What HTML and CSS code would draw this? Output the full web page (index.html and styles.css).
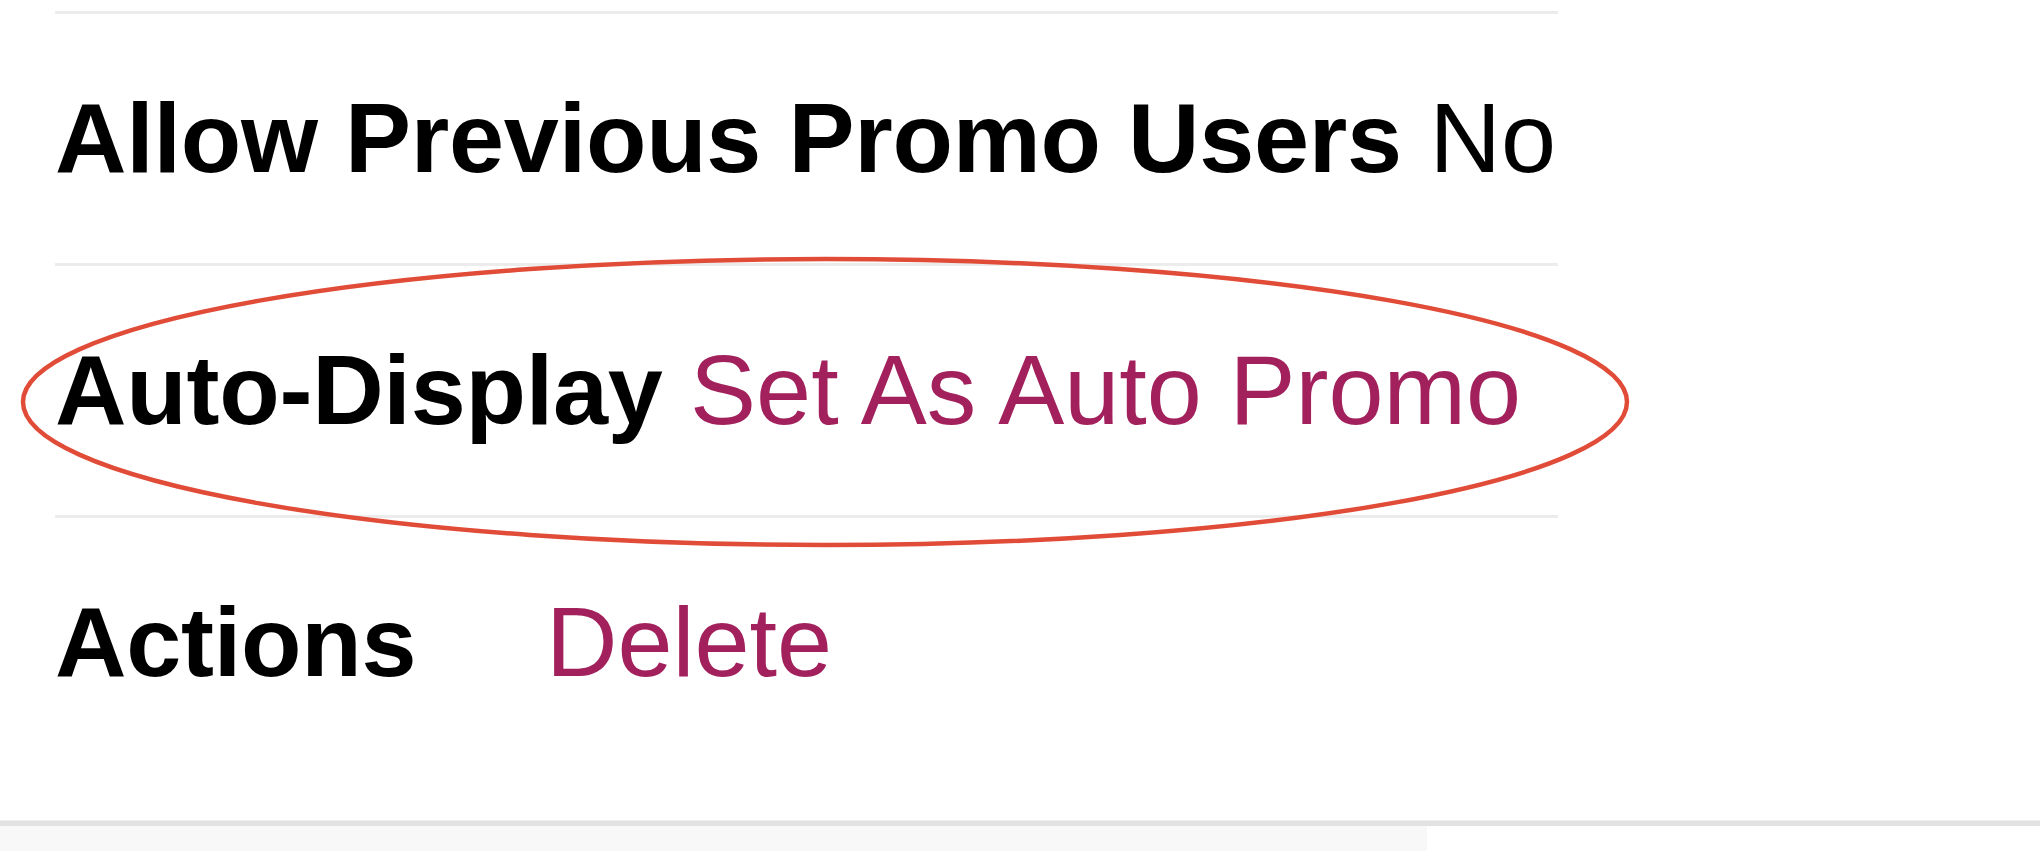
FILE: index.html
```html
<!DOCTYPE html>
<html lang="en">
<head>
<meta charset="utf-8">
<title>Promo details</title>
<link rel="stylesheet" href="styles.css">
</head>
<body>
<div class="page">
  <div class="details">
    <div class="row">
      <span class="label">Allow Previous Promo Users</span> <span class="value">No</span>
    </div>
    <div class="row row-auto">
      <span class="label">Auto-Display</span> <a class="link" href="#">Set As Auto Promo</a>
      <svg class="circle" viewBox="0 0 1610 294" width="1610" height="294" aria-hidden="true">
        <ellipse cx="805" cy="147" rx="802" ry="143" fill="none" stroke="#e14c38" stroke-width="4.5"/>
      </svg>
    </div>
    <div class="row row-actions">
      <span class="label label-actions">Actions</span><a class="link" href="#">Delete</a>
    </div>
  </div>
  <div class="footer">
    <div class="footer-left"></div>
  </div>
</div>
</body>
</html>
```

FILE: styles.css
```css
html, body {
  margin: 0;
  padding: 0;
  background: #ffffff;
}

.page {
  width: 2040px;
  height: 851px;
  overflow: hidden;
  display: flex;
  flex-direction: column;
  font-family: "Liberation Sans", Arial, sans-serif;
}

.details {
  margin-left: 55px;
  width: 1503px;
  padding-top: 11px;
  position: relative;
}

.row {
  position: relative;
  border-top: 3px solid #ececec;
  padding: 66px 0 68px;
  height: 115px;
  line-height: 115px;
  font-size: 99px;
  color: #000;
  white-space: nowrap;
}

.label {
  font-weight: bold;
  letter-spacing: -0.25px;
}

.value {
  font-weight: normal;
}

.link {
  color: #a2215d;
  text-decoration: none;
}

.label-actions {
  display: inline-block;
  width: 491px;
}

.circle {
  position: absolute;
  left: -35px;
  top: -11px;
  z-index: 2;
}

.footer {
  margin-top: 54px;
  flex: 1;
  display: flex;
  border-top: 5px solid #e2e2e2;
  box-shadow: 0 -1px 0 #eeeeee;
}

.footer-left {
  width: 1427px;
  background: #f8f8f8;
}
```
